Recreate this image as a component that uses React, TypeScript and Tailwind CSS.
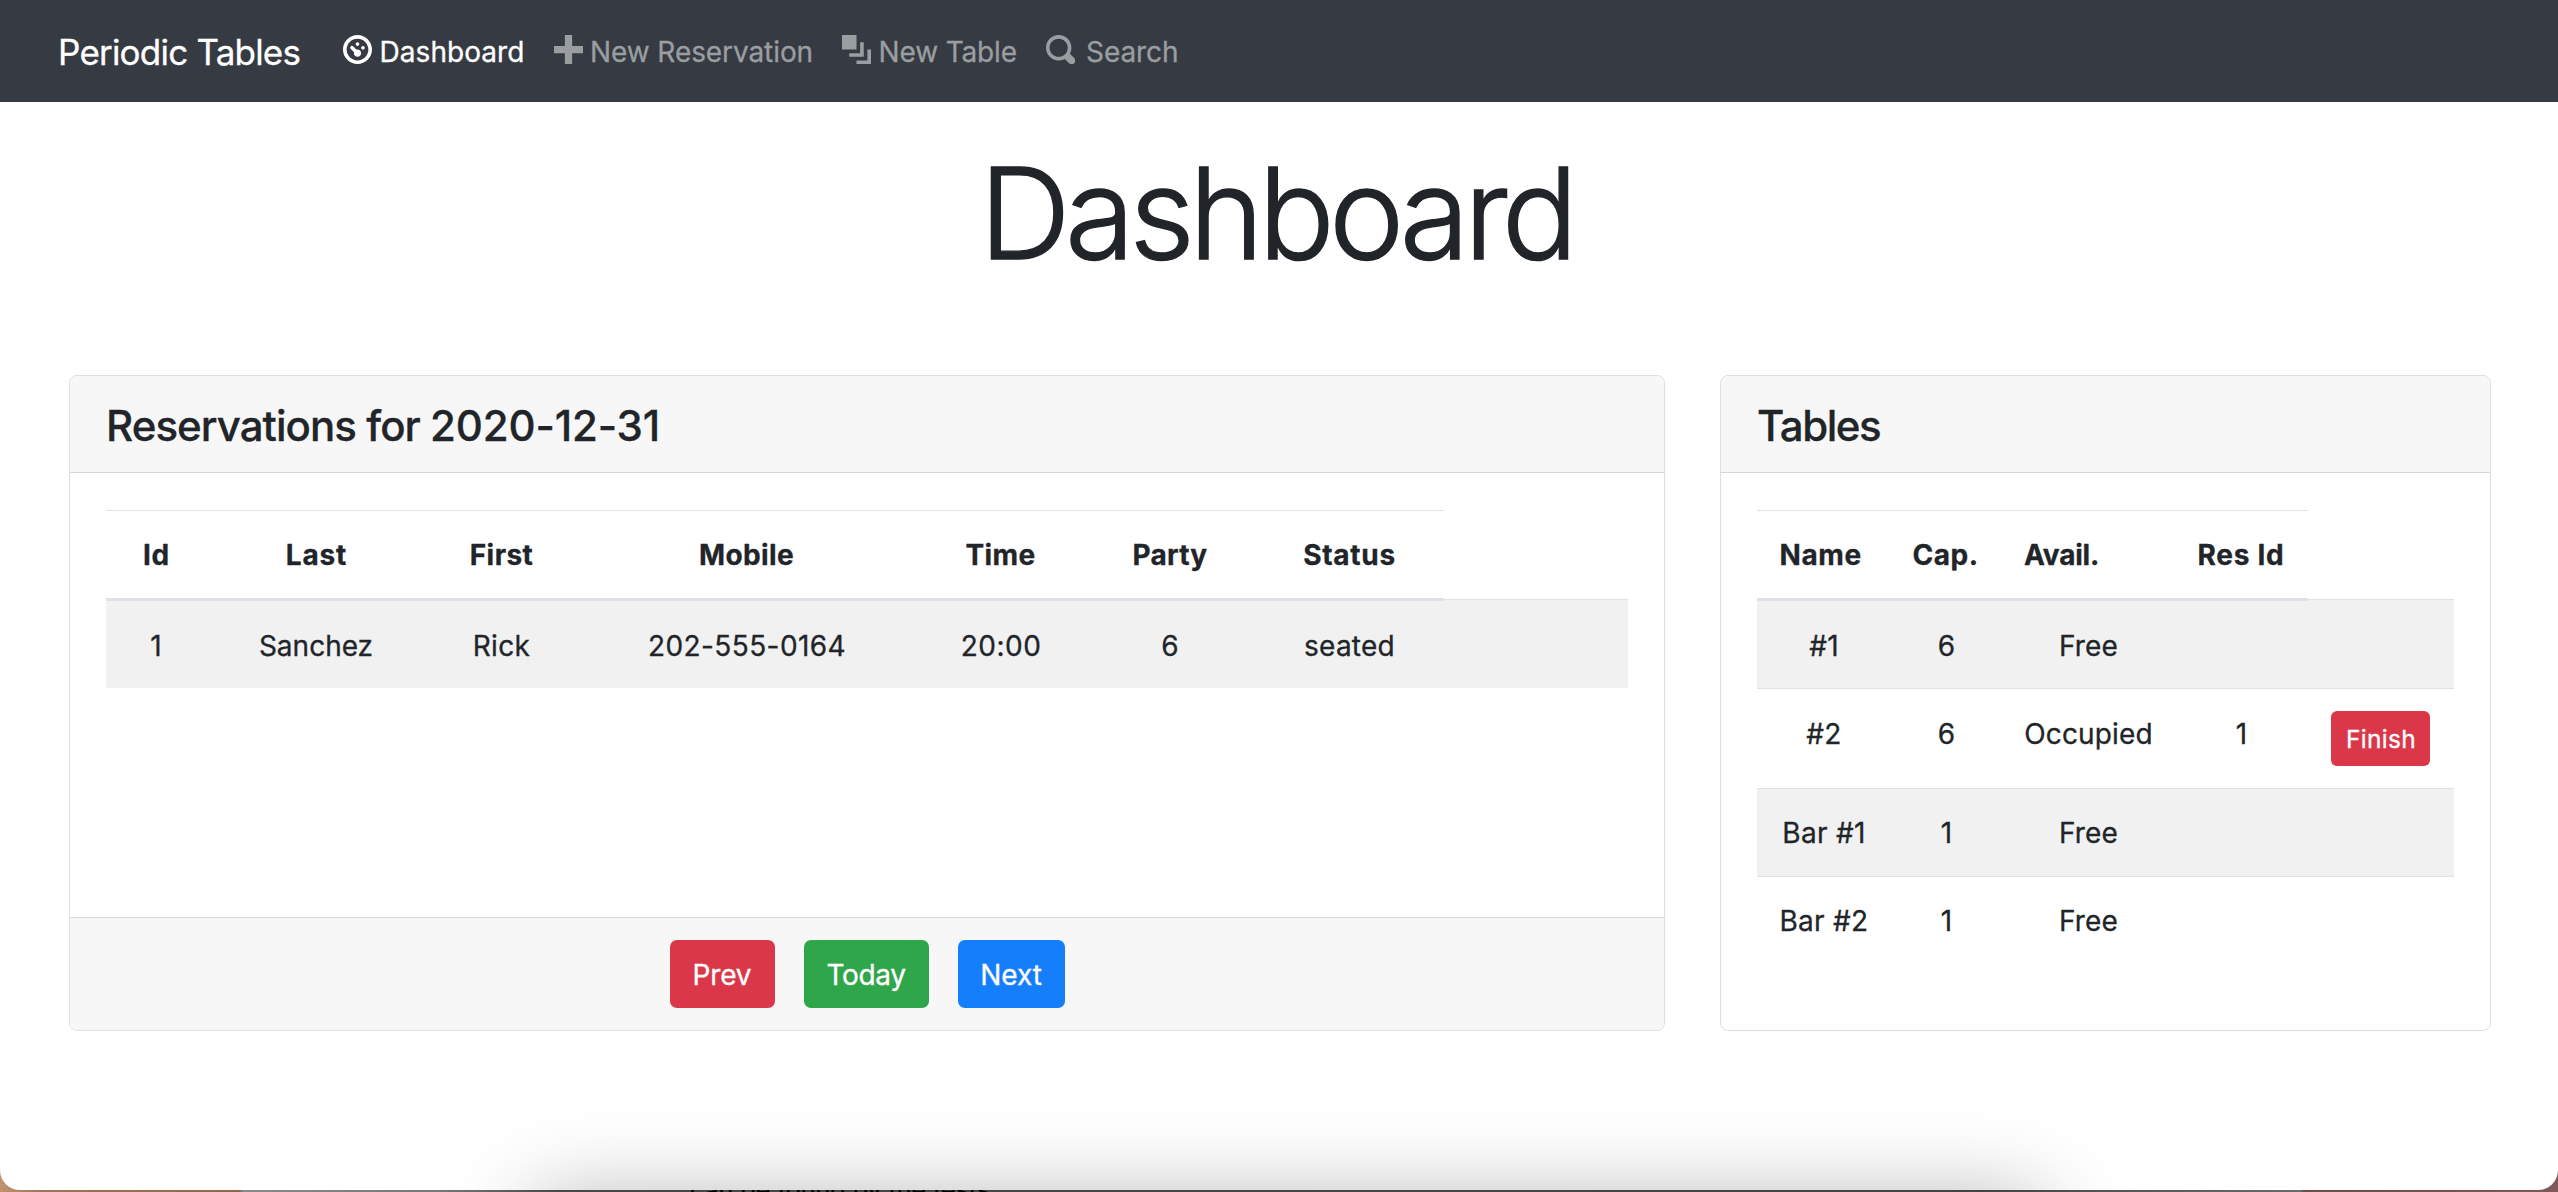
import type { ReactNode } from 'react';

function Icon({ d }: { d: string }) {
  return (
    <svg viewBox="0 0 8 8" className="-mt-[5px] h-[29px] w-[29px] shrink-0 fill-current">
      <path d={d} />
    </svg>
  );
}

const links = [
  {
    label: 'Dashboard',
    box: 'w-[210.5px] gap-[7.5px] text-white',
    text: 'tracking-[0.002em]',
    d: 'M4 0c-2.2 0-4 1.8-4 4s1.8 4 4 4 4-1.8 4-4-1.8-4-4-4zm0 1c1.66 0 3 1.34 3 3s-1.34 3-3 3-3-1.34-3-3 1.34-3 3-3zm0 1c-.28 0-.5.22-.5.5s.22.5.5.5.5-.22.5-.5-.22-.5-.5-.5zm-1.66 1a.5.5 0 0 0-.19.84l.91.91c-.02.08-.06.16-.06.25 0 .55.45 1 1 1s1-.45 1-1-.45-1-1-1c-.09 0-.17.04-.25.06l-.91-.91a.5.5 0 0 0-.44-.16.5.5 0 0 0-.06 0zm3.16 0c-.28 0-.5.22-.5.5s.22.5.5.5.5-.22.5-.5-.22-.5-.5-.5z',
  },
  {
    label: 'New Reservation',
    box: 'w-[288.5px] gap-[7.5px] text-[#9a9ea1]',
    text: 'tracking-[-0.003em]',
    d: 'M3 0v3h-3v2h3v3h2v-3h3v-2h-3v-3h-2z',
  },
  {
    label: 'New Table',
    box: 'w-[204px] gap-[7.5px] text-[#9a9ea1]',
    text: 'tracking-[-0.005em]',
    d: 'M0 0v4h4v-4h-4zm5 2v3h-3v1h4v-4h-1zm2 2v3h-3v1h4v-4h-1z',
  },
  {
    label: 'Search',
    box: 'w-[140px] gap-[11px] text-[#9a9ea1]',
    text: 'tracking-[-0.003em]',
    d: 'M3.5 0c-1.93 0-3.5 1.57-3.5 3.5s1.57 3.5 3.5 3.5c.59 0 1.17-.14 1.66-.41a1 1 0 0 0 .13.13l1 1a1.02 1.02 0 1 0 1.44-1.44l-1-1a1 1 0 0 0-.16-.13c.27-.49.44-1.06.44-1.66 0-1.93-1.55-3.5-3.5-3.5zm0 1c1.39 0 2.5 1.11 2.5 2.5 0 .66-.24 1.27-.66 1.72-.01.01-.02.02-.03.03a1 1 0 0 0-.13.13c-.44.4-1.04.63-1.69.63-1.39 0-2.5-1.11-2.5-2.5s1.11-2.5 2.5-2.5z',
  },
];

function Navbar() {
  return (
    <nav className="flex h-[102px] items-center bg-[#363a42] pt-[2px] pl-[58px] whitespace-nowrap">
      <a className="w-[285px] shrink-0 text-[35px] tracking-[-0.0225em] text-white">Periodic Tables</a>
      {links.map((l) => (
        <a key={l.label} className={`flex shrink-0 items-center ${l.box}`}>
          <Icon d={l.d} />
          <span className={l.text}>{l.label}</span>
        </a>
      ))}
    </nav>
  );
}

function Card({ title, width, tracking, footer, children }: { title: ReactNode; width: string; tracking: string; footer?: ReactNode; children: ReactNode }) {
  return (
    <section className={`flex h-[656px] flex-col overflow-hidden rounded-[8px] border border-[#dfdfdf] bg-white ${width}`}>
      <h4 className={`flex h-[97px] shrink-0 items-center border-b border-[#d5d5d5] bg-[#f7f7f7] pt-[2px] pl-[36px] text-[42px] font-medium whitespace-pre ${tracking}`}>{title}</h4>
      <div className="grow px-[36px] pt-[37px]">{children}</div>
      {footer}
    </section>
  );
}

const th = 'h-[91px] border-t border-b-[3px] border-t-[#dfe1e6] border-b-[#dee2e6] p-0 pt-[23px] align-top font-bold leading-[43px]';
const thEmpty = 'h-[91px] border-b border-[#f1f1f1] p-0 shadow-[inset_0_-1px_0_#dfe1e4]';
const table = 'w-full table-fixed border-separate border-spacing-0 text-center';

function ReservationsTable() {
  return (
    <table className={table}>
      <colgroup>
        <col className="w-[100px]" />
        <col className="w-[220px]" />
        <col className="w-[151px]" />
        <col className="w-[338px]" />
        <col className="w-[171px]" />
        <col className="w-[168px]" />
        <col className="w-[190px]" />
        <col />
      </colgroup>
      <thead>
        <tr>
          <th className={`${th} pl-[1px] tracking-[0.03em]`}>Id</th>
          <th className={`${th} pl-[1px] tracking-[0.03em]`}>Last</th>
          <th className={`${th} tracking-[0.015em]`}>First</th>
          <th className={`${th} pl-[1px] tracking-[0.014em]`}>Mobile</th>
          <th className={`${th} tracking-[0.012em]`}>Time</th>
          <th className={`${th} tracking-[0.0075em]`}>Party</th>
          <th className={`${th} pl-[1px] tracking-[0.026em]`}>Status</th>
          <th className={thEmpty} />
        </tr>
      </thead>
      <tbody>
        <tr className="h-[87px] bg-[#f1f1f1] align-top leading-[43px]">
          <td className="pt-[24px]">1</td>
          <td className="pt-[24px]">Sanchez</td>
          <td className="pt-[24px] tracking-[0.014em]">Rick</td>
          <td className="pt-[24px] pl-[2px] tracking-[0.015em]">202-555-0164</td>
          <td className="pt-[24px] pl-[1px] tracking-[0.018em]">20:00</td>
          <td className="pt-[24px]">6</td>
          <td className="pt-[24px] pl-[1px] tracking-[0.008em]">seated</td>
          <td />
        </tr>
      </tbody>
    </table>
  );
}

const rows = [
  { name: '#1', cap: '6', avail: 'Free', res: '', tr: 'h-[87px] bg-[#f1f1f1]', td: 'p-0 pt-[24px]' },
  { name: '#2', cap: '6', avail: 'Occupied', res: '1', tr: 'h-[100px]', td: 'border-t border-[#dfe1e4] p-0 pt-[24px]' },
  { name: 'Bar #1', cap: '1', avail: 'Free', res: '', tr: 'h-[88px] bg-[#f1f1f1]', td: 'border-t border-[#dfe1e4] p-0 pt-[23px]' },
  { name: 'Bar #2', cap: '1', avail: 'Free', res: '', tr: 'h-[88px]', td: 'border-t border-[#dfe1e4] p-0 pt-[23px]' },
];

function SeatingTable() {
  return (
    <table className={table}>
      <colgroup>
        <col className="w-[134px]" />
        <col className="w-[111px]" />
        <col className="w-[173px]" />
        <col className="w-[133px]" />
        <col />
      </colgroup>
      <thead>
        <tr className="text-left">
          <th className={`${th} tracking-[0.022em]`}><span className="pl-[22.5px]">Name</span></th>
          <th className={`${th} tracking-[0.018em]`}><span className="pl-[21.5px]">Cap.</span></th>
          <th className={`${th} tracking-[-0.0068em]`}><span className="pl-[22px]">Avail.</span></th>
          <th className={`${th} tracking-[0.026em]`}><span className="pl-[22.5px]">Res Id</span></th>
          <th className={thEmpty} />
        </tr>
      </thead>
      <tbody>
        {rows.map((r) => (
          <tr key={r.name} className={`align-top leading-[43px] ${r.tr}`}>
            <td className={`${r.td} tracking-[0.01em]`}>{r.name}</td>
            <td className={r.td}>{r.cap}</td>
            <td className={`${r.td} tracking-[0.006em]`}>{r.avail}</td>
            <td className={r.td}>{r.res}</td>
            <td className={r.res ? 'border-t border-[#dfe1e4] p-0 pt-[22px] pl-[23px]' : r.td}>
              {r.res && (
                <button className="flex h-[55px] w-[99px] items-center justify-center rounded-[6px] bg-[#da3849] pt-[1px] pl-[1px] text-[24.5px] tracking-[0.012em] text-white">
                  Finish
                </button>
              )}
            </td>
          </tr>
        ))}
      </tbody>
    </table>
  );
}

const button = 'flex h-[68px] items-center justify-center rounded-[7px] pt-[2px] text-white';

function DayControls() {
  return (
    <div className="flex h-[113px] shrink-0 justify-center gap-[29px] border-t border-[#d9d9d9] bg-[#f7f7f7] pt-[22px]">
      <button className={`${button} w-[105px] bg-[#da3849] tracking-[-0.0052em]`}>Prev</button>
      <button className={`${button} w-[125px] bg-[#30a64a] tracking-[-0.0128em]`}>Today</button>
      <button className={`${button} w-[107px] bg-[#157efb] tracking-[-0.0027em]`}>Next</button>
    </div>
  );
}

export default function App() {
  return (
    <div className="relative h-[1192px] w-[2558px] overflow-hidden bg-[linear-gradient(90deg,#c2936f_0,#a07456_40px,#8d674c_240px,#8a8a8a_243px,#777_440px,#484848_560px,#444_1980px,#606060_2200px,#6b6b6b_2300px,#6c4b4c_2304px,#80595a_2558px)] font-['Inter',sans-serif] text-[28px] leading-[43px] text-[#212529] [-webkit-text-stroke:0.3px_currentColor]">
      <p className="absolute top-[1174px] left-[690px] w-[320px] text-[25px] leading-[32px] whitespace-nowrap text-black">can be found by the tests</p>
      <div className="relative h-[1190px] overflow-hidden rounded-b-[20px] bg-white">
        <Navbar />
        <h1 className="mt-[34px] pr-[6px] text-center text-[127px] leading-[154px] font-light tracking-[-0.0445em] [-webkit-text-stroke:1.4px_currentColor]">Dashboard</h1>
        <main className="mt-[85px] flex gap-[55px] pl-[69px]">
          <Card
            title={<><span className="tracking-[-0.0225em]">Reservations for </span>2020-12-31</>}
            width="w-[1596px]"
            tracking="tracking-[-0.004em]"
            footer={<DayControls />}
          >
            <ReservationsTable />
          </Card>
          <Card title="Tables" width="w-[771px]" tracking="tracking-[-0.0353em]">
            <SeatingTable />
          </Card>
        </main>
        <div className="absolute top-[1205px] left-[535px] h-[200px] w-[1505px] shadow-[0_0_90px_rgba(0,0,0,0.35)]" />
      </div>
    </div>
  );
}
